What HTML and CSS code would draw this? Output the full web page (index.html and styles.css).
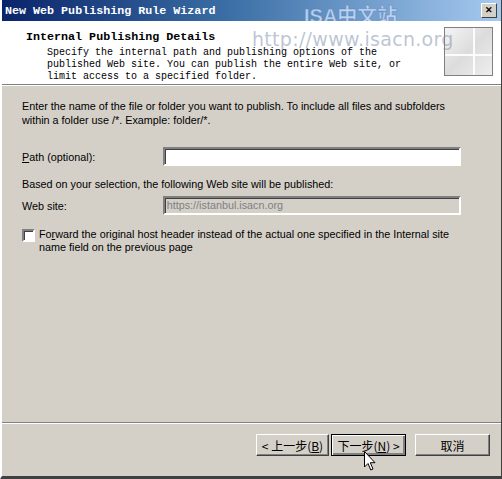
FILE: index.html
```html
<!DOCTYPE html>
<html lang="en">
<head>
<meta charset="utf-8">
<title>New Web Publishing Rule Wizard</title>
<link rel="stylesheet" href="styles.css">
</head>
<body>

<div class="window">
    <div class="titlebar">
        <span class="title">New Web Publishing Rule Wizard</span>
        <span class="mark-cn">ISA中文站</span>
        <span class="close">&#x2715;</span>
    </div>

    <div class="header">
        <div class="header-text">
            <div class="header-title">Internal Publishing Details</div>
            <div class="header-desc">Specify the internal path and publishing options of the<br>
            published Web site. You can publish the entire Web site, or<br>
            limit access to a specified folder.</div>
        </div>
        <div class="header-icon"></div>
        <span class="mark-url">http://www.isacn.org</span>
    </div>

    <div class="content">
        <p class="intro">Enter the name of the file or folder you want to publish. To include all files and subfolders<br>within a folder use /*. Example: folder/*.</p>

        <div class="field">
            <label class="field-label"><u>P</u>ath (optional):</label>
            <div class="textbox"></div>
        </div>

        <p class="note">Based on your selection, the following Web site will be published:</p>

        <div class="field field-site">
            <label class="field-label">Web site:</label>
            <div class="textbox disabled">https://istanbul.isacn.org</div>
        </div>

        <div class="check">
            <span class="checkbox"></span>
            <span class="check-label">Fo<u>r</u>ward the original host header instead of the actual one specified in the Internal site<br>name field on the previous page</span>
        </div>
    </div>

    <div class="footer">
        <button class="btn">&lt; 上一步(<u>B</u>)</button>
        <button class="btn btn-default">下一步(<u>N</u>) &gt;</button>
        <button class="btn btn-cancel">取消</button>
    </div>

    <svg class="cursor" width="14" height="22" viewBox="0 0 14 22">
        <path d="M0.5 0.5 L0.5 16 L4 12.5 L6.8 19 L9 18 L6.3 11.7 L11 11.7 Z" fill="#fff" stroke="#000" stroke-width="1"/>
    </svg>
</div>

</body>
</html>
```

FILE: styles.css
```css
body {
    margin: 0px;
    padding: 0px;
    font-family: 'Liberation Sans', 'Noto Sans CJK SC', sans-serif;
    font-size: 10.8px;
    color: #000000;
}

.window {
    position: relative;
    width: 499px;
    height: 476px;
    border-left: 2px solid #ffffff;
    border-right: 1px solid #404040;
    border-bottom: 3px solid #404040;
    background-color: #d4d0c8;
    display: flex;
    flex-direction: column;
    overflow: hidden;
}

.titlebar {
    position: relative;
    height: 21px;
    display: flex;
    align-items: center;
    padding: 0px 3px 0px 3px;
    background: linear-gradient(to right, #0a246a 0%, #3a6ea5 45%, #a6caf0 100%);
}

.title {
    font-family: 'Liberation Mono', monospace;
    font-weight: bold;
    font-size: 11.7px;
    color: #ffffff;
    flex: 1;
}

.mark-cn {
    position: absolute;
    left: 302px;
    top: 0px;
    font-family: 'Liberation Sans', 'Noto Sans CJK SC', sans-serif;
    font-size: 20px;
    font-weight: bold;
    color: rgba(220, 235, 255, 0.75);
    -webkit-text-stroke: 1px rgba(90, 130, 190, 0.5);
}

.close {
    width: 14px;
    height: 13px;
    background-color: #d4d0c8;
    border: 1px solid;
    border-color: #ffffff #404040 #404040 #ffffff;
    font-size: 9px;
    font-weight: bold;
    line-height: 13px;
    text-align: center;
    margin-right: 1px;
}

.header {
    position: relative;
    height: 63px;
    background-color: #ffffff;
    border-bottom: 1px solid #808080;
    box-shadow: 0px 1px 0px #ffffff;
    display: flex;
    justify-content: space-between;
    padding: 0px 8px 0px 24px;
}

.header-title {
    font-family: 'Liberation Mono', monospace;
    font-weight: bold;
    font-size: 11.7px;
    margin-top: 9px;
    line-height: 14px;
}

.header-desc {
    font-family: 'Liberation Mono', monospace;
    font-size: 10px;
    line-height: 12px;
    margin: 3px 0px 0px 21px;
}

.header-icon {
    width: 47px;
    height: 47px;
    margin-top: 6px;
    border: 1px solid #808080;
    background:
        linear-gradient(to right, rgba(255,255,255,0) 60%, rgba(255,255,255,0.9) 60%, rgba(255,255,255,0.9) 64%, rgba(255,255,255,0) 64%),
        linear-gradient(to bottom, rgba(255,255,255,0) 55%, rgba(255,255,255,0.9) 55%, rgba(255,255,255,0.9) 60%, rgba(255,255,255,0) 60%),
        linear-gradient(135deg, #f4f4f4 0%, #dcdcdc 50%, #eeeeee 100%);
}

.mark-url {
    position: absolute;
    left: 250px;
    top: 7px;
    font-family: 'DejaVu Sans', sans-serif;
    font-size: 19px;
    color: rgba(120, 140, 170, 0.5);
    letter-spacing: 0.3px;
}

.content {
    flex: 1;
    padding: 12px 40px 0px 20px;
    border-bottom: 1px solid #808080;
    margin-top: 2px;
}

.intro {
    margin: 0px;
    line-height: 14px;
}

.field {
    display: flex;
    align-items: center;
    margin-top: 20px;
}

.field-label {
    width: 142px;
}

.textbox {
    width: 293px;
    height: 15px;
    border: 2px solid;
    border-color: #808080 #ffffff #ffffff #808080;
    box-shadow: inset 1px 1px 0px #404040;
    background-color: #ffffff;
    padding: 0px 2px 0px 2px;
    line-height: 15px;
    color: #808080;
}

.textbox.disabled {
    background-color: #d4d0c8;
}

.note {
    margin: 11px 0px 0px 0px;
    line-height: 14px;
}

.field-site {
    margin-top: 5px;
}

.check {
    display: flex;
    align-items: flex-start;
    margin-top: 13px;
}

.checkbox {
    width: 9px;
    height: 9px;
    margin-top: 1px;
    border: 2px solid;
    border-color: #808080 #ffffff #ffffff #808080;
    box-shadow: inset 1px 1px 0px #404040;
    background-color: #ffffff;
}

.check-label {
    margin-left: 4px;
    line-height: 13px;
}

.footer {
    height: 42px;
    border-top: 1px solid #ffffff;
    display: flex;
    align-items: flex-start;
    padding: 10px 0px 0px 254px;
}

.btn {
    height: 22px;
    width: 73px;
    margin: 0px 2px 0px 0px;
    padding: 0px;
    font-family: 'Noto Sans CJK SC', sans-serif;
    font-size: 12px;
    color: #000000;
    background-color: #d4d0c8;
    border: 1px solid;
    border-color: #ffffff #404040 #404040 #ffffff;
    box-shadow: inset -1px -1px 0px #808080;
}

.btn-default {
    width: 75px;
    border: 1px solid #000000;
    box-shadow: inset 1px 1px 0px #ffffff, inset -2px -2px 0px #808080;
}

.btn-cancel {
    margin-left: 7px;
    width: 75px;
}

.cursor {
    position: absolute;
    left: 362px;
    top: 451px;
}
```
